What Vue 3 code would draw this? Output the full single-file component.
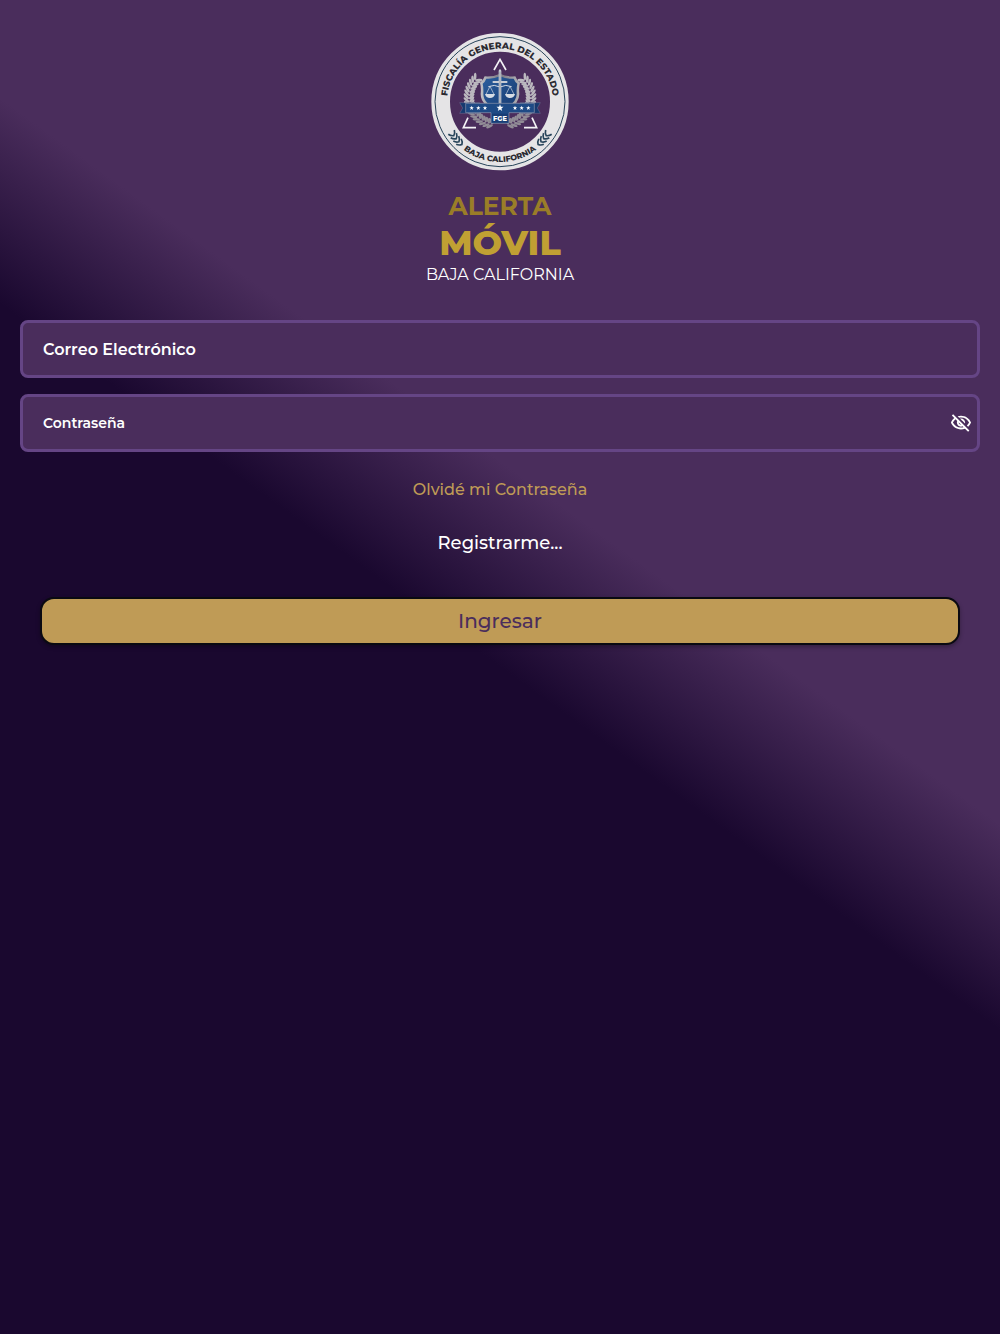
<template>
  <main class="login">
    <header class="brand">
      <svg class="logo" viewBox="0 0 450 450" role="img" aria-label="Fiscalía General del Estado">
        <defs>
          <path id="arc-top" d="M66 230a159 159 0 0 1 318 0" />
          <path id="arc-bottom" d="M44 230a181 181 0 0 0 362 0" />
          <linearGradient id="shield" x1="0" y1="0" x2="1" y2="1">
            <stop offset="0" stop-color="#2b5f9f" />
            <stop offset="1" stop-color="#17396f" />
          </linearGradient>
          <linearGradient id="silver" x1="0" y1="0" x2="1" y2="0">
            <stop offset="0" stop-color="#c4c5c9" />
            <stop offset="0.5" stop-color="#77757f" />
            <stop offset="1" stop-color="#b5b5ba" />
          </linearGradient>
        </defs>

        <circle cx="225" cy="230" r="178" fill="none" stroke="#e5e4e6" stroke-width="56" />
        <circle cx="225" cy="230" r="195" fill="none" stroke="#27445a" stroke-width="3" />

        <text class="ring-text">
          <textPath href="#arc-top" startOffset="50%" text-anchor="middle">FISCALÍA GENERAL DEL ESTADO</textPath>
        </text>
        <text class="ring-text small">
          <textPath href="#arc-bottom" startOffset="50%" text-anchor="middle">BAJA CALIFORNIA</textPath>
        </text>

        <g v-for="side in sides" :key="side" :transform="side">
          <path
            v-for="a in [145, 141, 137, 133]"
            :key="a"
            d="M-9 -11Q0 -8 4 0Q0 8 -9 11"
            :transform="chevronTransform(a)"
            fill="none"
            stroke="#27445a"
            stroke-width="5"
          />
        </g>

        <g fill="none" stroke="#f4f3f6" stroke-width="5">
          <path d="M207 135l18-32 18 32" />
          <path d="M129 278l-14 30h38" />
          <path d="M321 278l14 30h-38" />
        </g>

        <g v-for="side in sides" :key="'leaf' + side" :transform="side">
          <ellipse
            v-for="(leaf, i) in leaves"
            :key="i"
            :cx="leaf.x"
            :cy="leaf.y"
            rx="11"
            ry="4"
            :fill="leaf.color"
            :transform="`rotate(${leaf.angle} ${leaf.x} ${leaf.y})`"
          />
        </g>

        <path d="M225 146q-20 10-46 8-5 14-14 19 4 14 2 34 0 36 58 58 58-22 58-58-2-20 2-34-9-5-14-19-26 2-46-8z" fill="url(#silver)" />
        <path d="M225 154q-20 9-41 7-4 10-11 15 3 12 2 31 0 30 50 50 50-20 50-50-1-19 2-31-7-5-11-15-21 2-41-7z" fill="url(#shield)" />

        <g fill="none" stroke="#d5dbe4" stroke-width="3">
          <path d="M190 185q18-8 35 1 17-9 35-1" />
          <path d="M195 184l-12 24M195 184l12 24M255 184l-12 24M255 184l12 24" stroke-width="2" />
        </g>
        <path d="M180 207h30q-3 12-15 12t-15-12zM240 207h30q-3 12-15 12t-15-12z" fill="#d5dbe4" />
        <path d="M221 137q4-8 8 0v31h18v6h-18v63l-4 8-4-8v-63h-18v-6h18z" fill="#c8ccd4" />
        <path d="M225 140v100" stroke="#7f8794" stroke-width="2" />

        <path d="M104 233h60v32h-60l9-16zM346 233h-60v32h60l-9-16z" fill="#17396f" stroke="#8e96ac" stroke-width="1" />
        <path d="M122 235h206v28h-76v32h-54v-32h-76z" fill="#1e4a85" stroke="#8e96ac" stroke-width="2" />
        <path d="M201 266h48v26h-48z" fill="#183d75" />
        <polygon
          v-for="(s, i) in stars"
          :key="'s' + i"
          :points="starPoints(s)"
          fill="#fff"
        />
        <text class="fge" x="225" y="287" text-anchor="middle">FGE</text>
      </svg>
      <h1 class="title">
        <span class="title-top">ALERTA</span>
        <span class="title-main">MÓVIL</span>
      </h1>
      <p class="region">BAJA CALIFORNIA</p>
    </header>

    <form class="form" @submit.prevent>
      <div class="field">
        <label for="email" class="label-lg">Correo Electrónico</label>
        <input id="email" v-model="email" type="email" />
      </div>
      <div class="field">
        <label for="password">Contraseña</label>
        <input id="password" v-model="password" :type="showPassword ? 'text' : 'password'" />
        <button type="button" class="toggle" aria-label="Mostrar contraseña" @click="showPassword = !showPassword">
          <svg viewBox="0 0 24 24" width="22" height="22" fill="#fff">
            <path d="M12 6c3.79 0 7.17 2.13 8.82 5.5-.59 1.22-1.42 2.27-2.41 3.12l1.41 1.41c1.39-1.23 2.49-2.77 3.18-4.53C21.27 7.11 17 4 12 4c-1.27 0-2.49.2-3.64.57l1.65 1.65C10.66 6.09 11.32 6 12 6zm-1.07 1.14L13 9.21c.57.25 1.03.71 1.28 1.28l2.07 2.07c.08-.34.14-.7.14-1.07C16.5 9.01 14.48 7 12 7c-.37 0-.72.05-1.07.14zM2.01 3.87l2.68 2.68C3.06 7.83 1.77 9.53 1 11.5 2.73 15.89 7 19 12 19c1.52 0 2.98-.29 4.32-.82l3.42 3.42 1.41-1.41L3.42 2.45 2.01 3.87zm7.5 7.5l2.61 2.61c-.04.01-.08.02-.12.02-1.38 0-2.5-1.12-2.5-2.5 0-.05.01-.08.01-.13zm-3.4-3.4l1.75 1.75c-.23.55-.36 1.15-.36 1.78 0 2.48 2.02 4.5 4.5 4.5.63 0 1.23-.13 1.77-.36l.98.98c-.88.24-1.8.38-2.75.38-3.79 0-7.17-2.13-8.82-5.5.7-1.43 1.72-2.61 2.93-3.53z" />
          </svg>
        </button>
      </div>
      <a href="#" class="forgot">Olvidé mi Contraseña</a>
      <a href="#" class="register">Registrarme...</a>
      <button type="submit" class="submit">Ingresar</button>
    </form>
  </main>
</template>

<script setup>
import { ref } from 'vue'

const email = ref('')
const password = ref('')
const showPassword = ref(false)

const sides = ['translate(0 0)', 'translate(450 0) scale(-1 1)']

const stars = [
  { x: 140, y: 249, r: 7 },
  { x: 160, y: 249, r: 7 },
  { x: 180, y: 249, r: 7 },
  { x: 225, y: 249, r: 11 },
  { x: 270, y: 249, r: 7 },
  { x: 290, y: 249, r: 7 },
  { x: 310, y: 249, r: 7 },
]

// paired leaves along the left branch, mirrored for the right one
const leaves = []
for (let i = 0; i < 18; i++) {
  const t = ((255 - i * 7) * Math.PI) / 180
  const x = 218 + 86 * Math.cos(t)
  const y = 217 - 82 * Math.sin(t)
  const deg = (-t * 180) / Math.PI + 90
  const color = i < 7 ? '#918c96' : '#bbb8bf'
  leaves.push({ x: x - 8 * Math.cos(t), y: y + 8 * Math.sin(t), angle: deg + 42, color })
  leaves.push({ x: x + 8 * Math.cos(t), y: y - 8 * Math.sin(t), angle: deg - 42, color })
}

function chevronTransform(deg) {
  const a = (deg * Math.PI) / 180
  const x = (225 + 172 * Math.cos(a)).toFixed(1)
  const y = (230 + 172 * Math.sin(a)).toFixed(1)
  return `translate(${x} ${y}) rotate(${deg - 90})`
}

function starPoints({ x, y, r }) {
  return Array.from({ length: 10 }, (_, i) => {
    const a = (Math.PI / 5) * i - Math.PI / 2
    const d = i % 2 ? r * 0.42 : r
    return `${(x + d * Math.cos(a)).toFixed(1)},${(y + d * Math.sin(a)).toFixed(1)}`
  }).join(' ')
}
</script>

<style>
body {
  margin: 0;
  background: #1a082f;
}
</style>

<style scoped>
.login {
  min-height: 100vh;
  box-sizing: border-box;
  padding: 25px 20px;
  background: linear-gradient(216deg, #4a2d5c 40%, #1a082f 50%);
  font-family: Montserrat, Inter, 'Open Sans', sans-serif;
  color: #fff;
}

.brand {
  display: flex;
  flex-direction: column;
  align-items: center;
}

.logo {
  width: 150px;
  height: 150px;
}

.ring-text {
  font-size: 27px;
  font-weight: 800;
  fill: #2b2a31;
}

.ring-text.small {
  font-size: 24px;
}

.fge {
  font-size: 20px;
  font-weight: 800;
  fill: #fff;
}

.title {
  margin: 15px 0 0;
  display: flex;
  flex-direction: column;
  align-items: center;
}

.title-top {
  font-size: 25px;
  line-height: 32px;
  font-weight: 700;
  color: #9a7d28;
}

.title-main {
  font-size: 35px;
  line-height: 42px;
  font-weight: 800;
  color: #c0a033;
}

.region {
  margin: 0;
  font-size: 16px;
  line-height: 22px;
}

.form {
  display: flex;
  flex-direction: column;
  align-items: center;
  gap: 16px;
  margin-top: 34px;
}

.field {
  width: 100%;
  height: 58px;
  box-sizing: border-box;
  display: flex;
  align-items: center;
  gap: 12px;
  padding: 0 5px 0 20px;
  background: #4a2d5c;
  border: 3px solid #654585;
  border-radius: 8px;
}

.field label {
  font-size: 14px;
  font-weight: 600;
}

.field .label-lg {
  font-size: 16px;
}

.field input {
  flex: 1;
  min-width: 0;
  padding: 0;
  border: 0;
  outline: none;
  background: transparent;
  color: #fff;
  font: inherit;
}

.toggle {
  display: flex;
  padding: 0;
  border: 0;
  background: none;
  cursor: pointer;
}

.forgot {
  margin-top: 12px;
  font-size: 16px;
  line-height: 20px;
  font-weight: 500;
  color: #bf9b56;
  text-decoration: none;
}

.register {
  margin-top: 16px;
  font-size: 18px;
  line-height: 22px;
  font-weight: 500;
  color: #fff;
  text-decoration: none;
}

.submit {
  align-self: stretch;
  height: 48px;
  margin: 27px 20px 0;
  border: 2px solid #0a0a12;
  border-radius: 14px;
  background: #bf9b56;
  color: #4a2d5c;
  font-family: inherit;
  font-size: 20px;
  font-weight: 500;
  box-shadow: 0 2px 4px rgba(0, 0, 0, 0.3);
  cursor: pointer;
}
</style>
